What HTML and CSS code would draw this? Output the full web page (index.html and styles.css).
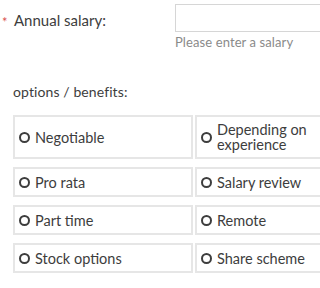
FILE: index.html
```html
<!DOCTYPE html>
<html>
<head>
<meta charset="utf-8">
<link rel="stylesheet" href="styles.css">
</head>
<body>
<div class="page">
  <div class="salary-row">
    <div class="label-wrap">
      <span class="req">*</span>
      <label class="label" for="salary">Annual salary:</label>
    </div>
    <div class="field">
      <input id="salary" class="input" type="text">
      <div class="help">Please enter a salary</div>
    </div>
  </div>

  <div class="section-title">options / benefits:</div>

  <div class="options">
    <div class="card"><span class="radio"></span><span class="opt">Negotiable</span></div>
    <div class="card"><span class="radio"></span><span class="opt">Depending on<br>experience</span></div>
    <div class="card"><span class="radio"></span><span class="opt">Pro rata</span></div>
    <div class="card"><span class="radio"></span><span class="opt">Salary review</span></div>
    <div class="card"><span class="radio"></span><span class="opt">Part time</span></div>
    <div class="card"><span class="radio"></span><span class="opt">Remote</span></div>
    <div class="card"><span class="radio"></span><span class="opt">Stock options</span></div>
    <div class="card"><span class="radio"></span><span class="opt">Share scheme</span></div>
  </div>
</div>
</body>
</html>
```

FILE: styles.css
```css
html, body {
  margin: 0;
  padding: 0;
  background: #ffffff;
  overflow: hidden;
}

.page {
  width: 420px;
  font-family: Lato, "Open Sans", sans-serif;
  color: #3d3d3d;
}

.salary-row {
  display: flex;
  padding-top: 4px;
}

.label-wrap {
  width: 175px;
  display: flex;
  align-items: flex-start;
  padding-top: 7px;
  box-sizing: border-box;
}

.req {
  color: #d9534f;
  font-size: 13px;
  width: 14px;
  padding-left: 2px;
  padding-top: 4px;
  box-sizing: border-box;
  line-height: 14px;
}

.label {
  font-size: 15px;
  line-height: 18px;
  color: #3d3d3d;
}

.field {
  display: flex;
  flex-direction: column;
}

.input {
  width: 200px;
  height: 28px;
  box-sizing: border-box;
  border: 1px solid #d6d6d6;
  margin: 0;
  padding: 0 6px;
  font: inherit;
}

.help {
  font-size: 13px;
  line-height: 16px;
  color: #8a8a8a;
  margin-top: 2px;
  white-space: nowrap;
  letter-spacing: 0.1px;
}

.section-title {
  font-size: 14px;
  line-height: 18px;
  padding-left: 13px;
  margin-top: 33px;
  letter-spacing: 0.1px;
}

.options {
  display: grid;
  grid-template-columns: 180px 180px;
  column-gap: 2px;
  row-gap: 8px;
  padding-left: 13px;
  margin-top: 14px;
}

.card {
  display: flex;
  align-items: center;
  border: 2px solid #e6e6e6;
  padding: 5px 4px;
  min-height: 16px;
}

.radio {
  width: 11px;
  height: 11px;
  box-sizing: border-box;
  border: 2px solid #3d3d3d;
  border-radius: 50%;
  flex: none;
  margin-right: 5px;
}

.opt {
  font-size: 14.5px;
  line-height: 15px;
  white-space: nowrap;
}
```
